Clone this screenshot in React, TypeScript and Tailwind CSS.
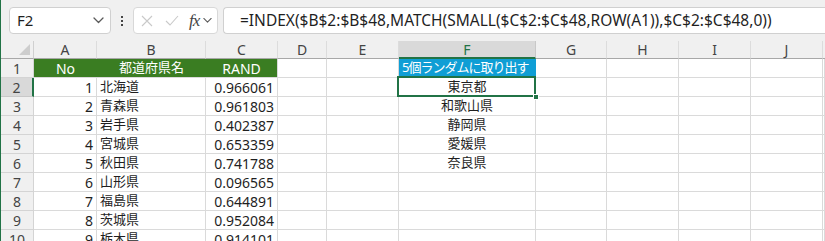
import React from "react";

const cols = ["A", "B", "C", "D", "E", "F", "G", "H", "I", "J"];

const data: [string, string, string][] = [
  ["1", "北海道", "0.966061"],
  ["2", "青森県", "0.961803"],
  ["3", "岩手県", "0.402387"],
  ["4", "宮城県", "0.653359"],
  ["5", "秋田県", "0.741788"],
  ["6", "山形県", "0.096565"],
  ["7", "福島県", "0.644891"],
  ["8", "茨城県", "0.952084"],
  ["9", "栃木県", "0.914101"],
];

const picked = ["東京都", "和歌山県", "静岡県", "愛媛県", "奈良県"];

const cell = "h-[19px] border-r border-b border-[#dadada] bg-white flex items-center overflow-hidden whitespace-nowrap";

function Chevron({ className }: { className?: string }) {
  return (
    <svg width="11" height="7" viewBox="0 0 11 7" className={className} fill="none">
      <path d="M1 1l4.5 4.5L10 1" stroke="#5a5a5a" strokeWidth="1.3" strokeLinecap="round" strokeLinejoin="round" />
    </svg>
  );
}

function FormulaBar() {
  return (
    <div className="h-[41px] flex items-start pt-[7px] pl-[8px]">
      {/* name box */}
      <div className="w-[102px] h-[27px] rounded-[4px] border border-[#d0d0d0] bg-white flex items-center pl-[7px] pr-[6px] justify-between">
        <span className="text-[15px] text-[#1f1f1f]">F2</span>
        <Chevron />
      </div>
      <div className="w-[22px] h-[27px] flex flex-col items-center justify-center gap-[2px]">
        <span className="w-[2px] h-[2px] bg-[#444]" />
        <span className="w-[2px] h-[2px] bg-[#444]" />
        <span className="w-[2px] h-[2px] bg-[#444]" />
      </div>
      {/* cancel / enter / fx */}
      <div className="w-[85px] h-[27px] rounded-[4px] border border-[#d8d8d8] bg-white flex items-center pl-[7px]">
        <svg width="12" height="12" viewBox="0 0 12 12" fill="none">
          <path d="M1 1l10 10M11 1L1 11" stroke="#c9c9c9" strokeWidth="1.1" />
        </svg>
        <svg width="14" height="11" viewBox="0 0 14 11" fill="none" className="ml-[12px]">
          <path d="M1 6l4 4L13 1" stroke="#c9c9c9" strokeWidth="1.1" />
        </svg>
        <span className="ml-[10px] font-['Liberation_Serif'] italic text-[17px] leading-none text-[#444] tracking-[-1px]">fx</span>
        <Chevron className="ml-[4px] w-[9px]" />
      </div>
      {/* formula */}
      <div className="ml-[5px] flex-1 h-[27px] rounded-l-[4px] border border-r-0 border-[#d0d0d0] bg-white flex items-center pl-[16px] text-[15.5px] text-[#1f1f1f] whitespace-nowrap overflow-hidden">
        =INDEX($B$2:$B$48,MATCH(SMALL($C$2:$C$48,ROW(A1)),$C$2:$C$48,0))
      </div>
    </div>
  );
}

export default function App() {
  const rows = Array.from({ length: 10 }, (_, i) => i + 1);
  return (
    <div className="w-[825px] h-[241px] overflow-hidden bg-[#f0f0f0] border-l border-[#217346] font-['Noto_Sans','Noto_Sans_CJK_JP',sans-serif]">
      <FormulaBar />
      <div className="grid grid-cols-[33px_63px_109px_72px_49px_72px_137px_71px_72px_72px_72px_1fr] bg-white">
        {/* column headers */}
        <div className="h-[18px] bg-[#f0f0f0] border-r border-b border-[#d0d0d0] border-b-[#a8a8a8] relative">
          <svg width="11" height="11" viewBox="0 0 11 11" className="absolute right-[3px] bottom-[3px]">
            <path d="M11 0v11H0z" fill="#cdcdcd" />
          </svg>
        </div>
        {cols.map((c) =>
          c === "F" ? (
            <div key={c} className="h-[18px] bg-[#d9d9d9] border-r border-[#c8c8c8] border-b-2 border-b-[#217346] flex items-center justify-center text-[14px] text-[#217346]">
              {c}
            </div>
          ) : (
            <div key={c} className="h-[18px] bg-[#f0f0f0] border-r border-b border-[#dcdcdc] border-b-[#a8a8a8] flex items-center justify-center text-[14px] text-[#444]">
              {c}
            </div>
          )
        )}
        <div className="h-[18px] bg-[#f0f0f0] border-b border-[#a8a8a8]" />

        {rows.map((r) => {
          const d = r >= 2 ? data[r - 2] : null;
          const f = r >= 2 && r <= 6 ? picked[r - 2] : "";
          const rowSel = r === 2;
          return (
            <React.Fragment key={r}>
              <div
                className={
                  "h-[19px] border-b flex items-center justify-center text-[14px] text-[#444] " +
                  (rowSel
                    ? "bg-[#d9d9d9] border-b-[#c8c8c8] border-r-2 border-r-[#217346]"
                    : "bg-[#f0f0f0] border-r border-[#d4d4d4]")
                }
              >
                {r}
              </div>
              {r === 1 ? (
                <>
                  <div className="h-[19px] bg-[#3a7d22] border-b border-[#dadada] flex items-center justify-center text-[14px] text-white">No</div>
                  <div className="h-[19px] bg-[#3a7d22] border-b border-[#dadada] flex items-center justify-center text-[13px] text-white">都道府県名</div>
                  <div className="h-[19px] bg-[#3a7d22] border-r border-b border-[#dadada] flex items-center justify-center text-[14px] text-white">RAND</div>
                </>
              ) : (
                <>
                  <div className={cell + " justify-end pr-[3px] text-[14px] text-[#1f1f1f]"}>{d![0]}</div>
                  <div className={cell + " pl-[3px] text-[13px] text-[#1f1f1f]"}>{d![1]}</div>
                  <div className={cell + " justify-end pr-[3px] text-[14px] text-[#1f1f1f]"}>{d![2]}</div>
                </>
              )}
              <div className={cell} />
              <div className={cell} />
              {r === 1 ? (
                <div className="h-[19px] bg-[#0f9ed5] border-b border-[#dadada] flex items-center pl-[3px] text-[13px] tracking-[-1px] text-white whitespace-nowrap overflow-hidden">
                  5個ランダムに取り出す
                </div>
              ) : r === 2 ? (
                <div className={cell + " relative justify-center text-[13px] text-[#1f1f1f] overflow-visible"}>
                  {f}
                  <div className="absolute -left-[2px] -top-[2px] -right-[1px] -bottom-[1px] border-2 border-[#217346]" />
                  <div className="absolute -right-[4px] -bottom-[4px] w-[6px] h-[6px] bg-[#217346] border border-white" />
                </div>
              ) : (
                <div className={cell + " justify-center text-[13px] text-[#1f1f1f]"}>{f}</div>
              )}
              <div className={cell} />
              <div className={cell} />
              <div className={cell} />
              <div className={cell} />
              <div className={cell} />
            </React.Fragment>
          );
        })}
      </div>
    </div>
  );
}
